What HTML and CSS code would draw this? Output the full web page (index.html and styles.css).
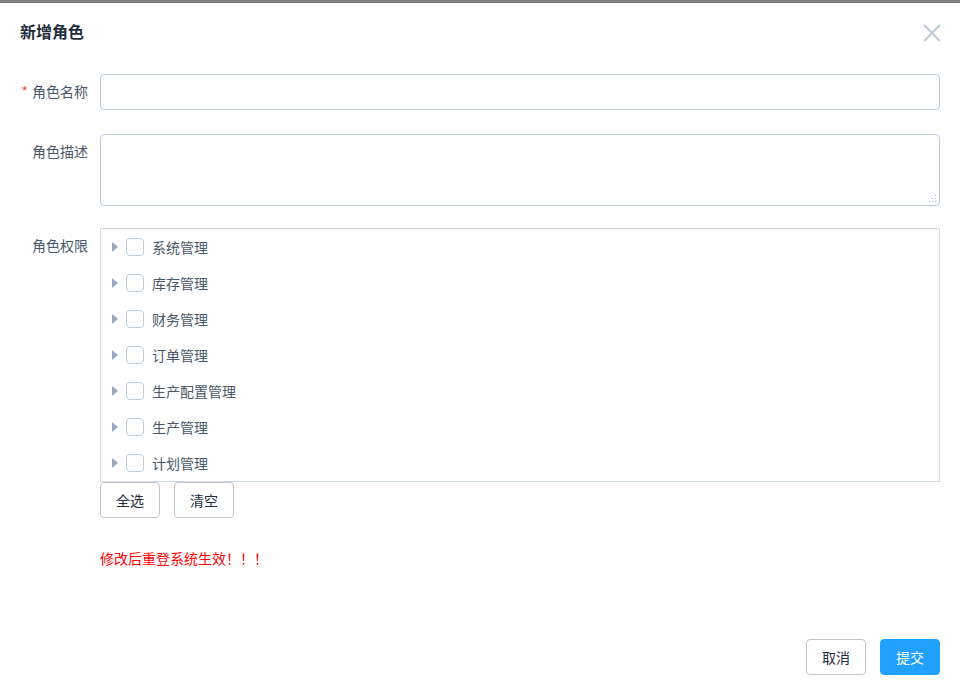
FILE: index.html
```html
<!DOCTYPE html>
<html lang="zh">
<head>
<meta charset="utf-8">
<title>新增角色</title>
<link rel="stylesheet" href="styles.css">
</head>
<body>
<div class="overlay-bar"></div>
<div class="dialog">
  <div class="dialog-header">
    <span class="dialog-title">新增角色</span>
    <button class="dialog-close" aria-label="关闭">
      <svg width="18" height="18" viewBox="0 0 18 18"><path d="M1 1 L17 17 M17 1 L1 17" stroke="#bfcbd9" stroke-width="2" fill="none"/></svg>
    </button>
  </div>
  <div class="dialog-body">
    <div class="form-item mb24">
      <label class="form-label"><span class="req">*</span>角色名称</label>
      <div class="form-content"><input class="input" type="text"></div>
    </div>
    <div class="form-item mb22">
      <label class="form-label">角色描述</label>
      <div class="form-content">
        <div class="textarea">
          <svg class="grip" width="8" height="8" viewBox="0 0 8 8"><g fill="#aab4c2"><rect x="6" y="0" width="1" height="1"/><rect x="3" y="3" width="1" height="1"/><rect x="6" y="3" width="1" height="1"/><rect x="0" y="6" width="1" height="1"/><rect x="3" y="6" width="1" height="1"/><rect x="6" y="6" width="1" height="1"/></g></svg>
        </div>
      </div>
    </div>
    <div class="form-item">
      <label class="form-label">角色权限</label>
      <div class="form-content">
        <div class="tree">
          <div class="tree-node"><span class="caret"></span><span class="checkbox"></span><span class="node-label">系统管理</span></div>
          <div class="tree-node"><span class="caret"></span><span class="checkbox"></span><span class="node-label">库存管理</span></div>
          <div class="tree-node"><span class="caret"></span><span class="checkbox"></span><span class="node-label">财务管理</span></div>
          <div class="tree-node"><span class="caret"></span><span class="checkbox"></span><span class="node-label">订单管理</span></div>
          <div class="tree-node"><span class="caret"></span><span class="checkbox"></span><span class="node-label">生产配置管理</span></div>
          <div class="tree-node"><span class="caret"></span><span class="checkbox"></span><span class="node-label">生产管理</span></div>
          <div class="tree-node"><span class="caret"></span><span class="checkbox"></span><span class="node-label">计划管理</span></div>
        </div>
        <div class="tree-actions">
          <button class="btn">全选</button>
          <button class="btn">清空</button>
        </div>
        <p class="warn">修改后重登系统生效！！！</p>
      </div>
    </div>
  </div>
  <div class="dialog-footer">
    <button class="btn">取消</button>
    <button class="btn btn-primary">提交</button>
  </div>
</div>
</body>
</html>
```
FILE: styles.css
```css
html, body {
  margin: 0;
  padding: 0;
  background: #fff;
}
body {
  width: 960px;
  height: 690px;
  overflow: hidden;
  font-family: "Noto Sans CJK SC", "Liberation Sans", sans-serif;
  font-size: 14px;
  color: #48576a;
}
.overlay-bar {
  height: 3px;
  background: #7f7f7f;
}
.dialog {
  height: 687px;
  display: flex;
  flex-direction: column;
  background: #fff;
}
.dialog-header {
  display: flex;
  align-items: center;
  justify-content: space-between;
  padding: 16px 20px 0 20px;
  height: 24px;
}
.dialog-title {
  font-size: 16px;
  font-weight: bold;
  color: #1f2d3d;
  line-height: 24px;
}
.dialog-close {
  border: 0;
  background: none;
  padding: 0;
  width: 18px;
  height: 18px;
  display: flex;
  margin-right: -1px;
  margin-top: 3px;
}
.dialog-body {
  flex: 1;
  padding: 31px 20px 0 20px;
}
.form-item {
  display: flex;
}
.mb24 { margin-bottom: 24px; }
.mb22 { margin-bottom: 22px; }
.form-label {
  width: 80px;
  flex: none;
  box-sizing: border-box;
  padding-right: 12px;
  text-align: right;
  line-height: 34px;
  height: 36px;
  color: #48576a;
}
.req {
  color: #ff4949;
  margin-right: 4px;
}
.form-content {
  flex: 1;
}
.input {
  display: block;
  width: 100%;
  box-sizing: border-box;
  height: 36px;
  border: 1px solid #bfcbd9;
  border-radius: 4px;
  padding: 0 10px;
  margin: 0;
  outline: none;
  font: inherit;
}
.textarea {
  position: relative;
  box-sizing: border-box;
  height: 72px;
  border: 1px solid #bfcbd9;
  border-radius: 4px;
}
.grip {
  position: absolute;
  right: 2px;
  bottom: 2px;
}
.tree {
  box-sizing: border-box;
  height: 254px;
  border: 1px solid #d1dbe5;
  overflow: hidden;
  padding-top: 0;
}
.tree-node {
  display: flex;
  align-items: center;
  height: 36px;
  padding-left: 10px;
}
.caret {
  width: 0;
  height: 0;
  border-top: 5px solid transparent;
  border-bottom: 5px solid transparent;
  border-left: 6px solid #97a8be;
  margin-left: 1px;
  margin-right: 8px;
}
.checkbox {
  width: 18px;
  height: 18px;
  box-sizing: border-box;
  border: 1px solid #bfcbd9;
  border-radius: 4px;
  background: #fff;
  margin-right: 8px;
}
.node-label {
  color: #48576a;
  font-size: 14px;
}
.tree-actions {
  display: flex;
  gap: 14px;
}
.btn {
  box-sizing: border-box;
  height: 36px;
  width: 60px;
  border: 1px solid #c4c4c4;
  border-radius: 4px;
  background: #fff;
  color: #1f2d3d;
  font: inherit;
  font-size: 14px;
  padding: 0;
  cursor: pointer;
}
.btn-primary {
  background: #20a0ff;
  border-color: #20a0ff;
  color: #fff;
}
.warn {
  margin: 30px 0 0 0;
  color: #ff0000;
  font-size: 14px;
  line-height: 20px;
}
.dialog-footer {
  display: flex;
  justify-content: flex-end;
  gap: 14px;
  padding: 0 20px 15px 20px;
}
```
